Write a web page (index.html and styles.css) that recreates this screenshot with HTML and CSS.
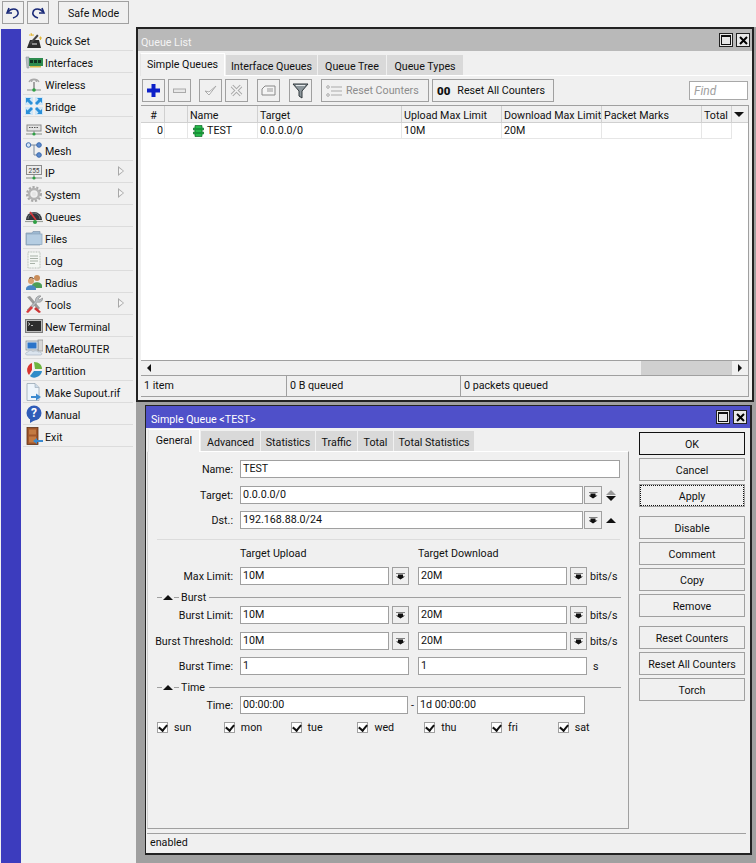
FILE: index.html
```html
<!DOCTYPE html>
<html lang="en">
<head>
    <meta charset="UTF-8">
    <title>Winbox - Queue List</title>
    <link rel="stylesheet" href="styles.css">
</head>
<body>
    <div class="topbar">
        <button class="tool-btn undo-btn"><svg width="16" height="14" viewBox="0 0 16 14"><path d="M4 2 L2 7 L7 7" fill="none" stroke="#1a2a78" stroke-width="1.6"/><path d="M3 6 C6 2 12 2 13 6 C14 9 11 11 8 12" fill="none" stroke="#1a2a78" stroke-width="1.6"/></svg></button>
        <button class="tool-btn redo-btn"><svg width="16" height="14" viewBox="0 0 16 14"><path d="M12 2 L14 7 L9 7" fill="none" stroke="#1a2a78" stroke-width="1.6"/><path d="M13 6 C10 2 4 2 3 6 C2 9 5 11 8 12" fill="none" stroke="#1a2a78" stroke-width="1.6"/></svg></button>
        <button class="tool-btn safe-btn">Safe Mode</button>
    </div>
    <div class="main">
        <div class="sidebar">
            <div class="blue-strip"></div>
            <ul class="menu">
                <li><svg class="menu-icon" viewBox="0 0 18 18"><path d="M2 17 L5 9 L14 9 L16 17 Z" fill="#2c2c2c"/><path d="M5 13 L13 4" stroke="#444" stroke-width="2"/><path d="M13 4 L15 2" stroke="#eee" stroke-width="2"/><path d="M6 2 L7 5 M4 4 L9 4 M14 7 L17 7 M15.500 5.500 L15.500 9" stroke="#e2b93a" stroke-width="1"/><rect x="7" y="12" width="5" height="2" fill="#8a8a8a"/></svg>Quick Set</li>
                <li><svg class="menu-icon" viewBox="0 0 18 18"><path d="M1 4 H4 V15 H2 Z" fill="#b8c0c4" stroke="#8a9298" stroke-width=".6"/><rect x="4" y="5" width="14" height="8" fill="#2e8b4e"/><rect x="5" y="7" width="3" height="3" fill="#10331f"/><rect x="9" y="7" width="3" height="3" fill="#10331f"/><rect x="13" y="7" width="3" height="3" fill="#10331f"/><rect x="5" y="13" width="11" height="1.500" fill="#d7b948"/></svg>Interfaces</li>
                <li><svg class="menu-icon" viewBox="0 0 18 18"><path d="M4 7 A5.500 5 0 0 1 14 7 M6.500 7 A2.500 2.500 0 0 1 11.500 7" fill="none" stroke="#a9a9a9" stroke-width="1.300"/><path d="M9 7 V14" stroke="#8a8a8a" stroke-width="1.500"/><path d="M2 15 H16" stroke="#9aa09a" stroke-width="1.200"/><circle cx="9" cy="15" r="1.800" fill="#2ea043"/></svg>Wireless</li>
                <li><svg class="menu-icon" viewBox="0 0 18 18"><rect x="0" y="0" width="8" height="8" fill="#cfe6f7"/><rect x="10" y="0" width="8" height="8" fill="#cfe6f7"/><rect x="0" y="10" width="8" height="8" fill="#cfe6f7"/><rect x="10" y="10" width="8" height="8" fill="#cfe6f7"/><path d="M1 1 H6 L4.500 2.500 L8 6 L6 8 L2.500 4.500 L1 6 Z M17 1 V6 L15.500 4.500 L12 8 L10 6 L13.500 2.500 L12 1 Z M1 17 V12 L2.500 13.500 L6 10 L8 12 L4.500 15.500 L6 17 Z M17 17 H12 L13.500 15.500 L10 12 L12 10 L15.500 13.500 L17 12 Z" fill="#2a8fd8"/></svg>Bridge</li>
                <li><svg class="menu-icon" viewBox="0 0 18 18"><rect x="2" y="6" width="14" height="6" fill="#e4e4e4" stroke="#8c8c8c"/><path d="M4 8.500 H14" stroke="#555" stroke-width="1.200" stroke-dasharray="1.500 1"/><path d="M1 15 H17" stroke="#9aa09a" stroke-width="1.200"/><path d="M9 12 V15" stroke="#8a8a8a"/><circle cx="9" cy="15" r="1.600" fill="#2ea043"/></svg>Switch</li>
                <li><svg class="menu-icon" viewBox="0 0 18 18"><path d="M4 4 H13 M9 4 V14 H14" fill="none" stroke="#7b8a9c" stroke-width="1"/><circle cx="3.500" cy="4" r="2.300" fill="#d6e4f5" stroke="#3d6cb0"/><circle cx="14" cy="4" r="2.300" fill="#5d8acb" stroke="#3d6cb0"/><circle cx="14" cy="14" r="2.300" fill="#5d8acb" stroke="#3d6cb0"/></svg>Mesh</li>
                <li class="has-sub"><svg class="menu-icon" viewBox="0 0 18 18"><rect x="1.500" y="2.500" width="15" height="9" fill="#ececec" stroke="#8c8c8c"/><text x="9" y="9.800" class="icon-text">255</text><path d="M1 15 H17" stroke="#9aa09a" stroke-width="1.200"/><path d="M9 12 V15" stroke="#8a8a8a"/><circle cx="9" cy="15" r="1.600" fill="#2ea043"/></svg>IP</li>
                <li class="has-sub"><svg class="menu-icon" viewBox="0 0 18 18"><circle cx="9" cy="9" r="5" fill="none" stroke="#b4b4b4" stroke-width="2.500"/><circle cx="9" cy="9" r="7" fill="none" stroke="#a8a8a8" stroke-width="2" stroke-dasharray="2.200 1.700"/><circle cx="9" cy="9" r="2.200" fill="#e6e6e6"/></svg>System</li>
                <li><svg class="menu-icon" viewBox="0 0 18 18"><path d="M1 13 A8 8 0 0 1 17 13 Z" fill="#30343a"/><path d="M3 12 A6 6 0 0 1 15 12" fill="none" stroke="#70757c"/><path d="M5 5 L11 13" stroke="#d9363a" stroke-width="1.500"/><path d="M0 14.500 H18" stroke="#9aa09a" stroke-width="1.200"/><circle cx="10" cy="15" r="2" fill="#2ea043"/></svg>Queues</li>
                <li><svg class="menu-icon" viewBox="0 0 18 18"><path d="M1 4 H7 L8 2.500 H15 V16 H1 Z" fill="#9db9d2" stroke="#7f97ae" stroke-width=".7"/><rect x="1.500" y="5" width="15.500" height="10.500" fill="#b5cde2" stroke="#8aa4bb" stroke-width=".7"/></svg>Files</li>
                <li><svg class="menu-icon" viewBox="0 0 18 18"><rect x="3" y="1" width="12" height="16" fill="#f4f7f4" stroke="#b5bdb5" stroke-dasharray="1 .6"/><path d="M5 5 H13 M5 7.500 H13 M5 10 H13 M5 12.500 H10" stroke="#a8b2a8" stroke-width="1"/></svg>Log</li>
                <li><svg class="menu-icon" viewBox="0 0 18 18"><circle cx="12" cy="5" r="3" fill="#c98d5a"/><path d="M7 13 C7 8 17 8 17 13 V15 H7 Z" fill="#4e9d57"/><circle cx="6" cy="8" r="3" fill="#d9a070"/><path d="M1 16 C1 11 11 11 11 16 V17 H1 Z" fill="#4a86c5"/><path d="M4 5.500 C5 4 8 4 8.500 6" stroke="#5b3a20" fill="none"/></svg>Radius</li>
                <li class="has-sub"><svg class="menu-icon" viewBox="0 0 18 18"><path d="M2 2 L5 1 L15 13 L13 15 Z" fill="#9a9a9a"/><path d="M11 12 L16 17 L14 18 L9 14 Z" fill="#c33"/><path d="M16 1 L13.500 3.500 L14.500 5 L17.500 3 C18 6 15 8 12.500 7 L4 16 L2 15 L10.500 6 C10 3 13 0 16 1 Z" fill="#b9bec2" stroke="#777" stroke-width=".5"/><path d="M1 17 L6 11 L8 13 L3 18 Z" fill="#d6393b"/></svg>Tools</li>
                <li><svg class="menu-icon" viewBox="0 0 18 18"><rect x="0.500" y="2.500" width="17" height="13" fill="#bdbdbd" stroke="#7c7c7c"/><rect x="2" y="4" width="14" height="10" fill="#2d2d2d"/><path d="M3 5.500 L5 7 L3 8.500 M6 8.500 H8" fill="none" stroke="#e0e0e0" stroke-width=".8"/></svg>New Terminal</li>
                <li><svg class="menu-icon" viewBox="0 0 18 18"><rect x="13" y="1" width="5" height="11" fill="#d8d8d8" stroke="#8c8c8c" stroke-width=".7"/><rect x="1" y="2" width="12" height="9" fill="#dfe5ea" stroke="#7f8a94" stroke-width=".7"/><rect x="2.500" y="3.500" width="9" height="6" fill="#2b74c9"/><path d="M2 16 C0 16 0 13 3 13 C4 11 7 11 8 13 C10 11 13 12 13 13 C16 12 18 15 16 16 Z" fill="#dbe4ee" stroke="#a9b6c3" stroke-width=".7"/></svg>MetaROUTER</li>
                <li><svg class="menu-icon" viewBox="0 0 18 18"><path d="M7 2 A7.500 7.500 0 0 0 4 14 L7 9 Z" fill="#d7332f"/><path d="M9 1 C14 1 17 4 17 8 L10 8 Z" fill="#6eb43f"/><path d="M5 15 L9 10 L17 10 C16.500 15 9 19 5 15 Z" fill="#2f8cc8"/></svg>Partition</li>
                <li><svg class="menu-icon" viewBox="0 0 18 18"><path d="M2 0.500 H10 L14 4.500 V17.500 H2 Z" fill="#eef5fb" stroke="#98a7b5" stroke-width=".8"/><path d="M10 .5 V4.500 H14" fill="#c9d9e7" stroke="#98a7b5" stroke-width=".6"/><path d="M6 13 H11 V10.500 L16 14 L11 17.500 V15 H6 Z" fill="#3b8ad0"/></svg>Make Supout.rif</li>
                <li><svg class="menu-icon" viewBox="0 0 18 18"><circle cx="9" cy="8" r="7.500" fill="#2f5cb8"/><path d="M5 14 L5 18 L10 15 Z" fill="#2f5cb8"/><text x="9" y="12" class="icon-help">?</text></svg>Manual</li>
                <li><svg class="menu-icon" viewBox="0 0 18 18"><rect x="2" y="0.500" width="11" height="17" fill="#a0562a" stroke="#5c3116" stroke-width=".8"/><rect x="4" y="2.500" width="7" height="5" fill="#c37a42"/><rect x="4" y="9.500" width="7" height="6" fill="#c37a42"/><path d="M18 13 H12 V11 L8 14 L12 17 V15 H18 Z" fill="#3b8ad0"/></svg>Exit</li>
            </ul>
        </div>
        <div class="workspace">
            <div class="window queue-list">
                <div class="titlebar inactive">
                    <span class="title">Queue List</span>
                    <span class="win-btn"><i class="max-glyph"></i></span>
                    <span class="win-btn"><svg width="9" height="9" viewBox="0 0 9 9"><path d="M1 1 L8 8 M8 1 L1 8" stroke="#000" stroke-width="2"/></svg></span>
                </div>
                <div class="tabs list-tabs">
                    <span class="tab active t-simple">Simple Queues</span>
                    <span class="tab t-iface">Interface Queues</span>
                    <span class="tab t-tree">Queue Tree</span>
                    <span class="tab t-types">Queue Types</span>
                </div>
                <div class="list-panel">
                    <div class="actions">
                        <button class="act-btn"><svg width="15" height="15" viewBox="0 0 15 15"><path d="M5.500 1 H9.500 V5.500 H14 V9.500 H9.500 V14 H5.500 V9.500 H1 V5.500 H5.500 Z" fill="#0c20c8"/></svg></button>
                        <button class="act-btn"><svg width="15" height="15" viewBox="0 0 15 15"><rect x="1.500" y="6" width="12" height="3.500" fill="#e8e8e8" stroke="#aaa"/></svg></button>
                        <button class="act-btn gap-small"><svg width="15" height="15" viewBox="0 0 15 15"><path d="M2 8 L6 12 L13 3 L6 9 Z" fill="#fff" stroke="#aaa"/></svg></button>
                        <button class="act-btn"><svg width="15" height="15" viewBox="0 0 15 15"><path d="M3 3 L12 12 M12 3 L3 12" stroke="#aaa" stroke-width="3.500"/><path d="M3 3 L12 12 M12 3 L3 12" stroke="#f4f4f4" stroke-width="1.500"/></svg></button>
                        <button class="act-btn gap-left"><svg width="15" height="15" viewBox="0 0 15 15"><path d="M4 3 H14 V12 H1 V6 Z" fill="#f4f4f4" stroke="#888"/><path d="M6 6 H12 M6 8 H12" stroke="#999"/></svg></button>
                        <button class="act-btn gap-left"><svg width="17" height="17" viewBox="0 0 17 17"><path d="M1 2 H16 L10 9 V16 L7 14 V9 Z" fill="#8d979c" stroke="#30383c"/><path d="M4 3.500 H13" stroke="#e4e8ea"/></svg></button>
                        <button class="text-act reset-one"><svg width="17" height="12" viewBox="0 0 17 12"><path d="M5 2 H16 M5 6 H16 M5 10 H16" stroke="#aaa"/><circle cx="2" cy="2" r="1.300" fill="none" stroke="#aaa"/><circle cx="2" cy="10" r="1.300" fill="none" stroke="#aaa"/></svg>Reset Counters</button>
                        <button class="text-act reset-all"><b class="zeros">00</b>Reset All Counters</button>
                        <input class="find" type="text" placeholder="Find">
                    </div>
                    <div class="table">
                        <div class="thead">
                            <span class="c-num center">#</span>
                            <span class="c-flag"></span>
                            <span class="c-name">Name</span>
                            <span class="c-target">Target</span>
                            <span class="c-up">Upload Max Limit</span>
                            <span class="c-down">Download Max Limit</span>
                            <span class="c-marks">Packet Marks</span>
                            <span class="c-total">Total</span>
                            <span class="c-drop"><i class="tri-down"></i></span>
                        </div>
                        <div class="tbody">
                            <div class="trow">
                                <span class="c-num num-cell">0</span>
                                <span class="c-flag"></span>
                                <span class="c-name name-cell"><svg width="11" height="12" viewBox="0 0 11 12"><path d="M2 0.500 H9 V3 H10.500 V5 H9 V7 H10.500 V9 H9 V11.500 H2 V9 H.5 V7 H2 V5 H.5 V3 H2 Z" fill="#26b84a" stroke="#0d6a26" stroke-width=".7"/><path d="M2 4 H9 M2 8 H9" stroke="#0d6a26"/></svg>TEST</span>
                                <span class="c-target">0.0.0.0/0</span>
                                <span class="c-up">10M</span>
                                <span class="c-down">20M</span>
                                <span class="c-marks"></span>
                                <span class="c-total"></span>
                            </div>
                        </div>
                        <div class="hscroll">
                            <span class="sc-arrow"><i class="tri-left"></i></span>
                            <span class="sc-track"></span>
                            <span class="sc-corner"></span>
                            <span class="sc-arrow"><i class="tri-right"></i></span>
                        </div>
                    </div>
                    <div class="statusbar">
                        <span class="s-items">1 item</span>
                        <span class="s-bytes">0 B queued</span>
                        <span class="s-packets">0 packets queued</span>
                    </div>
                </div>
            </div>

            <div class="window queue-edit">
                <div class="titlebar">
                    <span class="title">Simple Queue &lt;TEST&gt;</span>
                    <span class="win-btn"><i class="max-glyph"></i></span>
                    <span class="win-btn"><svg width="9" height="9" viewBox="0 0 9 9"><path d="M1 1 L8 8 M8 1 L1 8" stroke="#000" stroke-width="2"/></svg></span>
                </div>
                <div class="dialog">
                    <div class="dialog-left">
                        <div class="tabs edit-tabs">
                            <span class="tab active t-general">General</span>
                            <span class="tab t-advanced">Advanced</span>
                            <span class="tab t-stats">Statistics</span>
                            <span class="tab t-traffic">Traffic</span>
                            <span class="tab t-sum">Total</span>
                            <span class="tab t-sumstats">Total Statistics</span>
                        </div>
                        <div class="form">
                            <div class="row">
                                <label>Name:</label>
                                <span class="field f-full">TEST</span>
                            </div>
                            <div class="row row-tight">
                                <label>Target:</label>
                                <span class="field f-wide">0.0.0.0/0</span>
                                <span class="drop"><i class="drop-glyph"></i></span>
                                <span class="updown"><i class="tri-up grey"></i><i class="tri-down"></i></span>
                            </div>
                            <div class="row">
                                <label>Dst.:</label>
                                <span class="field f-wide">192.168.88.0/24</span>
                                <span class="drop"><i class="drop-glyph"></i></span>
                                <span class="updown"><i class="tri-up"></i></span>
                            </div>
                            <hr class="sep">
                            <div class="heads">
                                <span class="head-up">Target Upload</span>
                                <span>Target Download</span>
                            </div>
                            <div class="row row-short">
                                <label>Max Limit:</label>
                                <span class="field f-half">10M</span>
                                <span class="drop"><i class="drop-glyph"></i></span>
                                <span class="field f-half f-next">20M</span>
                                <span class="drop"><i class="drop-glyph"></i></span>
                                <span class="unit">bits/s</span>
                            </div>
                            <div class="section">
                                <span class="dash"></span><i class="tri-up"></i><span class="dash"></span>
                                <span class="section-name">Burst</span>
                                <span class="section-line"></span>
                            </div>
                            <div class="row">
                                <label>Burst Limit:</label>
                                <span class="field f-half">10M</span>
                                <span class="drop"><i class="drop-glyph"></i></span>
                                <span class="field f-half f-next">20M</span>
                                <span class="drop"><i class="drop-glyph"></i></span>
                                <span class="unit">bits/s</span>
                            </div>
                            <div class="row row-tight">
                                <label>Burst Threshold:</label>
                                <span class="field f-half">10M</span>
                                <span class="drop"><i class="drop-glyph"></i></span>
                                <span class="field f-half f-next">20M</span>
                                <span class="drop"><i class="drop-glyph"></i></span>
                                <span class="unit">bits/s</span>
                            </div>
                            <div class="row row-short">
                                <label>Burst Time:</label>
                                <span class="field f-time">1</span>
                                <span class="field f-time f-next">1</span>
                                <span class="unit unit-s">s</span>
                            </div>
                            <div class="section">
                                <span class="dash"></span><i class="tri-up"></i><span class="dash"></span>
                                <span class="section-name">Time</span>
                                <span class="section-line"></span>
                            </div>
                            <div class="row row-tight">
                                <label>Time:</label>
                                <span class="field f-clock">00:00:00</span>
                                <span class="dash-text">-</span>
                                <span class="field f-clock">1d 00:00:00</span>
                            </div>
                            <div class="days">
                                <span class="day"><i class="check"></i>sun</span>
                                <span class="day"><i class="check"></i>mon</span>
                                <span class="day"><i class="check"></i>tue</span>
                                <span class="day"><i class="check"></i>wed</span>
                                <span class="day"><i class="check"></i>thu</span>
                                <span class="day"><i class="check"></i>fri</span>
                                <span class="day"><i class="check"></i>sat</span>
                            </div>
                        </div>
                    </div>
                    <div class="dialog-buttons">
                        <button class="d-btn default">OK</button>
                        <button class="d-btn">Cancel</button>
                        <button class="d-btn focused">Apply</button>
                        <button class="d-btn group-start">Disable</button>
                        <button class="d-btn">Comment</button>
                        <button class="d-btn">Copy</button>
                        <button class="d-btn">Remove</button>
                        <button class="d-btn group-next">Reset Counters</button>
                        <button class="d-btn">Reset All Counters</button>
                        <button class="d-btn">Torch</button>
                    </div>
                </div>
                <div class="dialog-status">enabled</div>
            </div>
        </div>
    </div>
</body>
</html>
```

FILE: styles.css
```css
* {
    box-sizing: border-box;
}

body {
    margin: 0;
    width: 756px;
    height: 863px;
    overflow: hidden;
    font-family: Roboto, "Liberation Sans", sans-serif;
    font-size: 10.700px;
    color: #111;
    background-color: #f0f0f0;
}

button {
    font: inherit;
    color: inherit;
    padding: 0;
}

i {
    display: block;
}

/* top toolbar */
.topbar {
    height: 27px;
    padding: 1px 0 0 2px;
    display: flex;
    align-items: flex-start;
    background-color: #f0f0f0;
}

.tool-btn {
    height: 23px;
    background-color: #f0f0f0;
    border: 1px solid #a0a0a0;
    display: flex;
    align-items: center;
    justify-content: center;
}

.undo-btn,
.redo-btn {
    width: 22px;
    margin-right: 3px;
}

.safe-btn {
    width: 71px;
    margin-left: 6px;
    padding-top: 1px;
}

.main {
    display: flex;
    height: 836px;
}

/* left menu */
.sidebar {
    width: 136px;
    padding: 2px 0 0 1px;
    display: flex;
    background-color: #f0f0f0;
}

.blue-strip {
    width: 20px;
    background-color: #3c3cbe;
}

.menu {
    list-style: none;
    margin: 0;
    padding: 0 0 0 2px;
    width: 112px;
}

.menu li {
    position: relative;
    height: 22px;
    padding: 3px 0 0 22px;
    display: flex;
    align-items: center;
    border-bottom: 1px solid #dcdcdc;
}

.menu-icon {
    position: absolute;
    left: 2px;
    top: 2px;
    width: 18px;
    height: 18px;
}

.has-sub::after {
    content: "";
    position: absolute;
    right: 9px;
    top: 5px;
    border-left: 6px solid #a8a8a8;
    border-top: 5px solid transparent;
    border-bottom: 5px solid transparent;
}

.has-sub::before {
    content: "";
    position: absolute;
    z-index: 1;
    right: 10px;
    top: 7px;
    border-left: 4px solid #f6f6f6;
    border-top: 3px solid transparent;
    border-bottom: 3px solid transparent;
}

.icon-text {
    font-size: 6.500px;
    text-anchor: middle;
    fill: #444;
}

.icon-help {
    font-size: 12px;
    font-weight: bold;
    text-anchor: middle;
    fill: #fff;
}

/* desktop */
.workspace {
    flex: 1;
    background-color: #a0a0a0;
    display: flex;
    flex-direction: column;
}

.window {
    background-color: #f0f0f0;
    border: 2px solid #222;
}

.queue-list {
    width: 618px;
    height: 375px;
}

.queue-edit {
    width: 607px;
    height: 450px;
    margin: 3px 0 0 9px;
    border-width: 1px 2px 2px 1px;
}

.titlebar {
    height: 22px;
    padding: 2px 3px 0 5px;
    display: flex;
    align-items: center;
    background-color: #4f50c9;
    color: #fff;
}

.titlebar.inactive {
    padding: 2px 2px 0 3px;
    background-color: #b9b9b9;
    color: #f4f4f4;
}

.title {
    flex: 1;
    position: relative;
    top: 1px;
}

.win-btn {
    width: 14px;
    height: 14px;
    margin-left: 3px;
    position: relative;
    top: -1px;
    background-color: #e8e8e8;
    border: 1px solid #222;
    display: flex;
    align-items: center;
    justify-content: center;
}

.max-glyph {
    width: 10px;
    height: 10px;
    border: 1px solid #111;
    border-top-width: 2px;
}

/* tabs */
.tabs {
    display: flex;
    align-items: flex-end;
    height: 24px;
}

.list-tabs {
    padding-left: 2px;
}

.edit-tabs {
    height: 23px;
    padding-left: 1px;
}

.tab {
    height: 20px;
    padding-top: 2px;
    margin-right: 1px;
    background-color: #d9d9d9;
    display: flex;
    align-items: center;
    justify-content: center;
}

.tab.active {
    height: 23px;
    padding: 0 0 2px;
    background-color: #f0f0f0;
    border: 1px solid #fff;
    border-bottom: 0;
    border-left-color: #e4e4e4;
    position: relative;
    top: 1px;
}

.t-simple { width: 85px; }
.t-iface { width: 91px; }
.t-tree { width: 68px; }
.t-types { width: 76px; }
.t-general { width: 52px; }
.t-advanced { width: 59px; }
.t-stats { width: 54px; }
.t-traffic { width: 41px; }
.t-sum { width: 35px; }
.t-sumstats { width: 80px; }

/* queue list */
.list-panel {
    height: 325px;
    margin: 0 1px 0 3px;
    border-top: 1px solid #fff;
}

.actions {
    height: 29px;
    padding: 3px 0 0 1px;
    display: flex;
    align-items: flex-start;
}

.act-btn {
    width: 23px;
    height: 23px;
    margin-right: 3px;
    background-color: #f0f0f0;
    border: 1px solid #a0a0a0;
    display: flex;
    align-items: center;
    justify-content: center;
}

.act-btn.gap-small {
    margin-left: 5px;
}

.act-btn.gap-left {
    margin-left: 6px;
}

.text-act {
    height: 23px;
    background-color: #f0f0f0;
    border: 1px solid #a0a0a0;
    display: flex;
    align-items: center;
    padding-left: 4px;
}

.reset-one {
    width: 108px;
    margin-left: 6px;
    gap: 3px;
    color: #8c8c8c;
}

.reset-all {
    width: 122px;
    margin-left: 3px;
    gap: 7px;
}

.zeros {
    font-size: 11.500px;
    font-weight: 900;
    line-height: 10px;
}

.find {
    width: 59px;
    height: 19px;
    margin: 2px 0 0 135px;
    padding: 0 4px;
    font: italic 12px Roboto, "Liberation Sans", sans-serif;
    border: 1px solid #a8a8a8;
    background-color: #fff;
}

.find::placeholder {
    color: #a0a0a0;
}

.table {
    width: 608px;
    height: 271px;
    border: 1px solid #a0a0a0;
    border-width: 1px 1px 1px 0;
    display: flex;
    flex-direction: column;
}

.thead,
.trow {
    display: flex;
}

.thead {
    height: 17px;
    background-color: #f0f0f0;
}

.thead span {
    border-right: 1px solid #d0d0d0;
    border-bottom: 1px solid #d0d0d0;
    padding: 3px 0 0 2px;
    overflow: hidden;
    white-space: nowrap;
}

.tbody {
    flex: 1;
    background-color: #fff;
}

.trow {
    height: 16px;
}

.trow span {
    border-right: 1px solid #e6e6e6;
    border-bottom: 1px solid #e6e6e6;
    padding: 1px 0 0 2px;
}

.center {
    text-align: center;
}

.trow .num-cell {
    text-align: right;
    padding-right: 1px;
}

.c-num { width: 24px; }
.c-flag { width: 23px; }
.c-name { width: 70px; }
.c-target { width: 144px; }
.c-up { width: 100px; }
.c-down { width: 100px; }
.c-marks { width: 100px; }
.c-total { width: 30px; }

.thead .c-drop {
    width: 16px;
    padding: 6px 0 0 2px;
    border-right: 0;
}

.trow .name-cell {
    display: flex;
    align-items: center;
    gap: 3px;
    padding: 0 0 0 5px;
}

.tri-down {
    width: 0;
    height: 0;
    border-left: 5px solid transparent;
    border-right: 5px solid transparent;
    border-top: 5px solid #111;
}

.tri-up {
    width: 0;
    height: 0;
    border-left: 5px solid transparent;
    border-right: 5px solid transparent;
    border-bottom: 5px solid #111;
}

.tri-up.grey {
    border-bottom-color: #999;
}

.tri-left {
    width: 0;
    height: 0;
    border-top: 4px solid transparent;
    border-bottom: 4px solid transparent;
    border-right: 4px solid #111;
}

.tri-right {
    width: 0;
    height: 0;
    border-top: 4px solid transparent;
    border-bottom: 4px solid transparent;
    border-left: 4px solid #111;
}

.hscroll {
    height: 15px;
    display: flex;
    background-color: #f0f0f0;
    border-top: 1px solid #a0a0a0;
}

.sc-arrow {
    width: 16px;
    display: flex;
    align-items: center;
    justify-content: center;
}

.sc-track {
    flex: 1;
}

.sc-corner {
    width: 91px;
    background-color: #d0d0d0;
}

.statusbar {
    height: 21px;
    width: 608px;
    display: flex;
    align-items: center;
    border-bottom: 1px solid #a0a0a0;
    border-right: 1px solid #a0a0a0;
}

.statusbar span {
    height: 100%;
    padding: 3px 0 0 3px;
    border-right: 1px solid #a0a0a0;
}

.s-items { width: 146px; }
.s-bytes { width: 174px; }
.statusbar .s-packets { flex: 1; border-right: 0; }

/* edit dialog */
.dialog {
    display: flex;
    height: 402px;
}

.dialog-left {
    width: 482px;
    margin-left: 1px;
}

.form {
    height: 378px;
    padding: 8px 0 0 0;
    border-top: 1px solid #fff;
    border-left: 1px solid #cfcfcf;
    border-right: 1px solid #a0a0a0;
    border-bottom: 1px solid #a0a0a0;
}

.row {
    display: flex;
    align-items: center;
    height: 18px;
    margin-bottom: 8px;
}

.row-tight {
    margin-bottom: 7px;
}

.row-short {
    margin-bottom: 4px;
}

.row label {
    width: 85px;
    margin-right: 7px;
    text-align: right;
    white-space: nowrap;
}

.field {
    height: 18px;
    padding: 0 2px;
    background-color: #fff;
    border: 1px solid #a0a0a0;
    line-height: 16px;
}

.f-full { width: 380px; }
.f-wide { width: 343px; }
.f-half { width: 149px; }
.f-time { width: 169px; }
.f-clock { width: 168px; }
.f-next { margin-left: 9px; }

.drop {
    width: 17px;
    height: 18px;
    margin-left: 3px;
    background-color: #f0f0f0;
    border: 1px solid #a0a0a0;
    display: flex;
    align-items: center;
    justify-content: center;
}

.f-wide + .drop {
    width: 18px;
    margin-left: 1px;
}

.drop-glyph {
    width: 9px;
    height: 7px;
    background-color: #111;
    clip-path: path("M0 0H9V1H0Z M2 2H7V4H9L4.500 7L0 4H2Z");
}

.updown {
    margin-left: 4px;
    display: flex;
    flex-direction: column;
    gap: 1px;
}

.sep {
    width: 463px;
    margin: 10px 0 0 9px;
    border: 0;
    border-top: 1px solid #dcdcdc;
}

.heads {
    height: 22px;
    padding: 7px 0 0 92px;
    display: flex;
    margin-bottom: 5px;
}

.head-up {
    width: 178px;
}

.section {
    height: 16px;
    margin-bottom: 1px;
    padding-left: 9px;
    display: flex;
    align-items: center;
}

.section + .row-tight {
    margin-top: 1px;
}

.dash {
    width: 5px;
    height: 1px;
    background-color: #a0a0a0;
    margin-right: 1px;
}

.section .tri-up {
    margin-right: 1px;
}

.section-name {
    width: 28px;
    margin-left: 1px;
}

.section-line {
    flex: 1;
    height: 1px;
    margin-right: 7px;
    background-color: #a0a0a0;
}

.unit {
    margin-left: 3px;
}

.unit-s {
    margin-left: 6px;
}

.dash-text {
    width: 9px;
    text-align: center;
}

.days {
    display: flex;
    padding-left: 9px;
}

.day {
    width: 66.800px;
    height: 12px;
    display: flex;
    align-items: center;
    gap: 6px;
}

.check {
    width: 11px;
    height: 11px;
    background-color: #fff;
    border: 1px solid #a0a0a0;
    position: relative;
}

.check::after {
    content: "";
    position: absolute;
    left: 2px;
    top: 0;
    width: 4px;
    height: 6px;
    border-right: 2px solid #111;
    border-bottom: 2px solid #111;
    transform: rotate(40deg);
}

.dialog-buttons {
    width: 106px;
    margin-left: 10px;
    padding-top: 4px;
    display: flex;
    flex-direction: column;
    align-items: stretch;
}

.d-btn {
    height: 23px;
    margin-bottom: 3px;
    padding-top: 1px;
    background-color: #f0f0f0;
    border: 1px solid #a0a0a0;
}

.d-btn.default {
    border: 1px solid #111;
}

.d-btn.focused {
    outline: 1px dotted #111;
    outline-offset: -2px;
}

.d-btn.group-start {
    margin-top: 6px;
}

.d-btn.group-next {
    margin-top: 6px;
}

.dialog-status {
    height: 19px;
    margin: 3px 4px 0 1px;
    padding: 2px 0 0 3px;
    border-top: 1px solid #a0a0a0;
    background-color: #f0f0f0;
}
```
